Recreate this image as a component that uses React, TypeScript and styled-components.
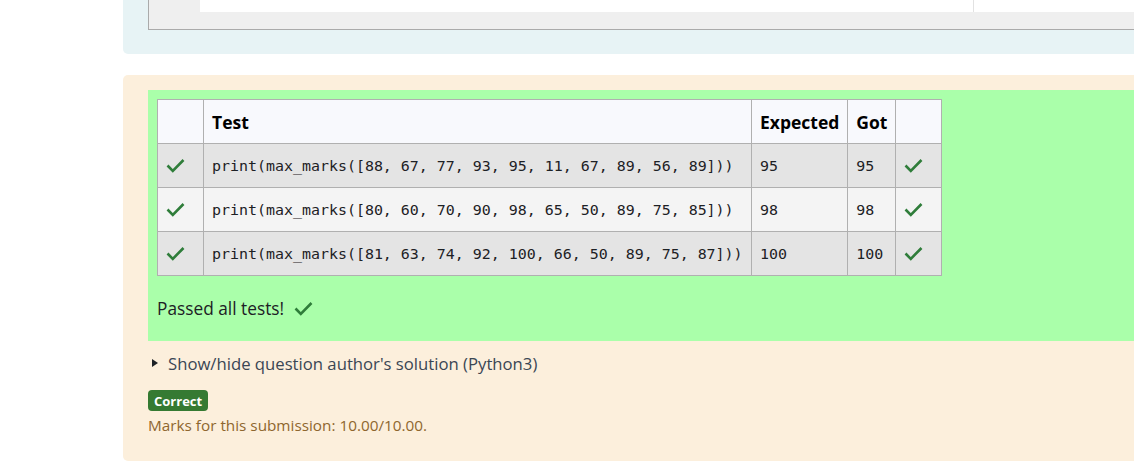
import styled, { createGlobalStyle } from "styled-components";

const GlobalStyle = createGlobalStyle`
    html, body {
        margin: 0;
        padding: 0;
        background: #ffffff;
        overflow: hidden;
    }
    body {
        font-family: "Open Sans", "Noto Sans", sans-serif;
        color: #1d2125;
    }
`;

const Page = styled.div`
    width: 1240px;
    padding-left: 123px;
`;

const Formulation = styled.div`
    background-color: #e7f3f5;
    border-radius: 0 0 5px 5px;
    padding: 0 0 24px 25px;
`;

const Editor = styled.div`
    display: flex;
    height: 30px;
    box-sizing: border-box;
    border: 1px solid #aaaaaa;
    border-top: none;
    background-color: #efefef;
`;

const Gutter = styled.div`
    width: 51px;
`;

const EditorText = styled.div`
    flex: 1;
    height: 12px;
    background-color: #ffffff;
`;

const PrintMargin = styled.div`
    width: 773px;
    height: 100%;
    border-right: 1px solid #e2e2e2;
`;

const Outcome = styled.div`
    margin-top: 21px;
    background-color: #fcefdc;
    border-radius: 5px;
    padding: 15px 0 25px 25px;
`;

const Feedback = styled.div`
    background-color: #aaffaa;
    padding: 9px 9px 0;
`;

const Table = styled.table`
    border-collapse: collapse;
    background-color: #f8f9fd;
`;

const HeadCell = styled.th<{ $w: number }>`
    width: ${(p) => p.$w}px;
    height: 44px;
    box-sizing: border-box;
    border: 1px solid #b0b0b0;
    padding: 0 8px;
    text-align: left;
    font-weight: 700;
    font-size: 17.5px;
    color: #000000;
    background-color: #f8f9fd;
`;

const Row = styled.tr<{ $odd: boolean }>`
    background-color: ${(p) => (p.$odd ? "#e4e4e4" : "#f4f4f4")};
`;

const Cell = styled.td`
    height: 44px;
    box-sizing: border-box;
    border: 1px solid #b0b0b0;
    padding: 0 8px;
    font-family: "DejaVu Sans Mono", "Liberation Mono", monospace;
    font-size: 14.95px;
    color: #1d2125;
    white-space: pre;
`;

const IconCell = styled.td`
    height: 44px;
    box-sizing: border-box;
    border: 1px solid #b0b0b0;
    padding: 3px 0 0 8px;
    vertical-align: middle;
`;

const Passed = styled.div`
    height: 65px;
    display: flex;
    align-items: center;
    gap: 10px;
    font-size: 17.3px;
    color: #1d2125;
`;

const Toggle = styled.div`
    margin-top: 10px;
    height: 24px;
    display: flex;
    align-items: center;
    gap: 10px;
    padding-left: 4px;
    font-size: 16.7px;
    color: #3a4654;
`;

const Arrow = styled.span`
    width: 0;
    height: 0;
    border-top: 4px solid transparent;
    border-bottom: 4px solid transparent;
    border-left: 6px solid #1d2125;
`;

const Badge = styled.div`
    display: flex;
    align-items: center;
    width: fit-content;
    margin-top: 15px;
    height: 21px;
    padding: 0 6px;
    border-radius: 4px;
    background-color: #357a32;
    color: #ffffff;
    font-weight: 700;
    font-size: 13px;
`;

const Marks = styled.div`
    margin-top: 3px;
    line-height: 22px;
    font-size: 15.3px;
    color: #8e662e;
`;

const Check = () => (
    <svg width="19" height="15" viewBox="0 0 19 15">
        <polyline
            points="1.5,7.5 6.8,12.8 17.5,2"
            fill="none"
            stroke="#2f7d3a"
            strokeWidth="2.6"
        />
    </svg>
);

const tests = [
    { code: "print(max_marks([88, 67, 77, 93, 95, 11, 67, 89, 56, 89]))", expected: "95", got: "95" },
    { code: "print(max_marks([80, 60, 70, 90, 98, 65, 50, 89, 75, 85]))", expected: "98", got: "98" },
    { code: "print(max_marks([81, 63, 74, 92, 100, 66, 50, 89, 75, 87]))", expected: "100", got: "100" },
];

export default function App() {
    return (
        <>
            <GlobalStyle />
            <Page>
                <Formulation>
                    <Editor>
                        <Gutter />
                        <EditorText>
                            <PrintMargin />
                        </EditorText>
                    </Editor>
                </Formulation>
                <Outcome>
                    <Feedback>
                        <Table>
                            <thead>
                                <tr>
                                    <HeadCell $w={46} />
                                    <HeadCell $w={548}>Test</HeadCell>
                                    <HeadCell $w={96}>Expected</HeadCell>
                                    <HeadCell $w={48}>Got</HeadCell>
                                    <HeadCell $w={46} />
                                </tr>
                            </thead>
                            <tbody>
                                {tests.map((t, i) => (
                                    <Row key={i} $odd={i % 2 === 0}>
                                        <IconCell>
                                            <Check />
                                        </IconCell>
                                        <Cell>{t.code}</Cell>
                                        <Cell>{t.expected}</Cell>
                                        <Cell>{t.got}</Cell>
                                        <IconCell>
                                            <Check />
                                        </IconCell>
                                    </Row>
                                ))}
                            </tbody>
                        </Table>
                        <Passed>
                            Passed all tests!
                            <Check />
                        </Passed>
                    </Feedback>
                    <Toggle>
                        <Arrow />
                        Show/hide question author's solution (Python3)
                    </Toggle>
                    <Badge>Correct</Badge>
                    <Marks>Marks for this submission: 10.00/10.00.</Marks>
                </Outcome>
            </Page>
        </>
    );
}
